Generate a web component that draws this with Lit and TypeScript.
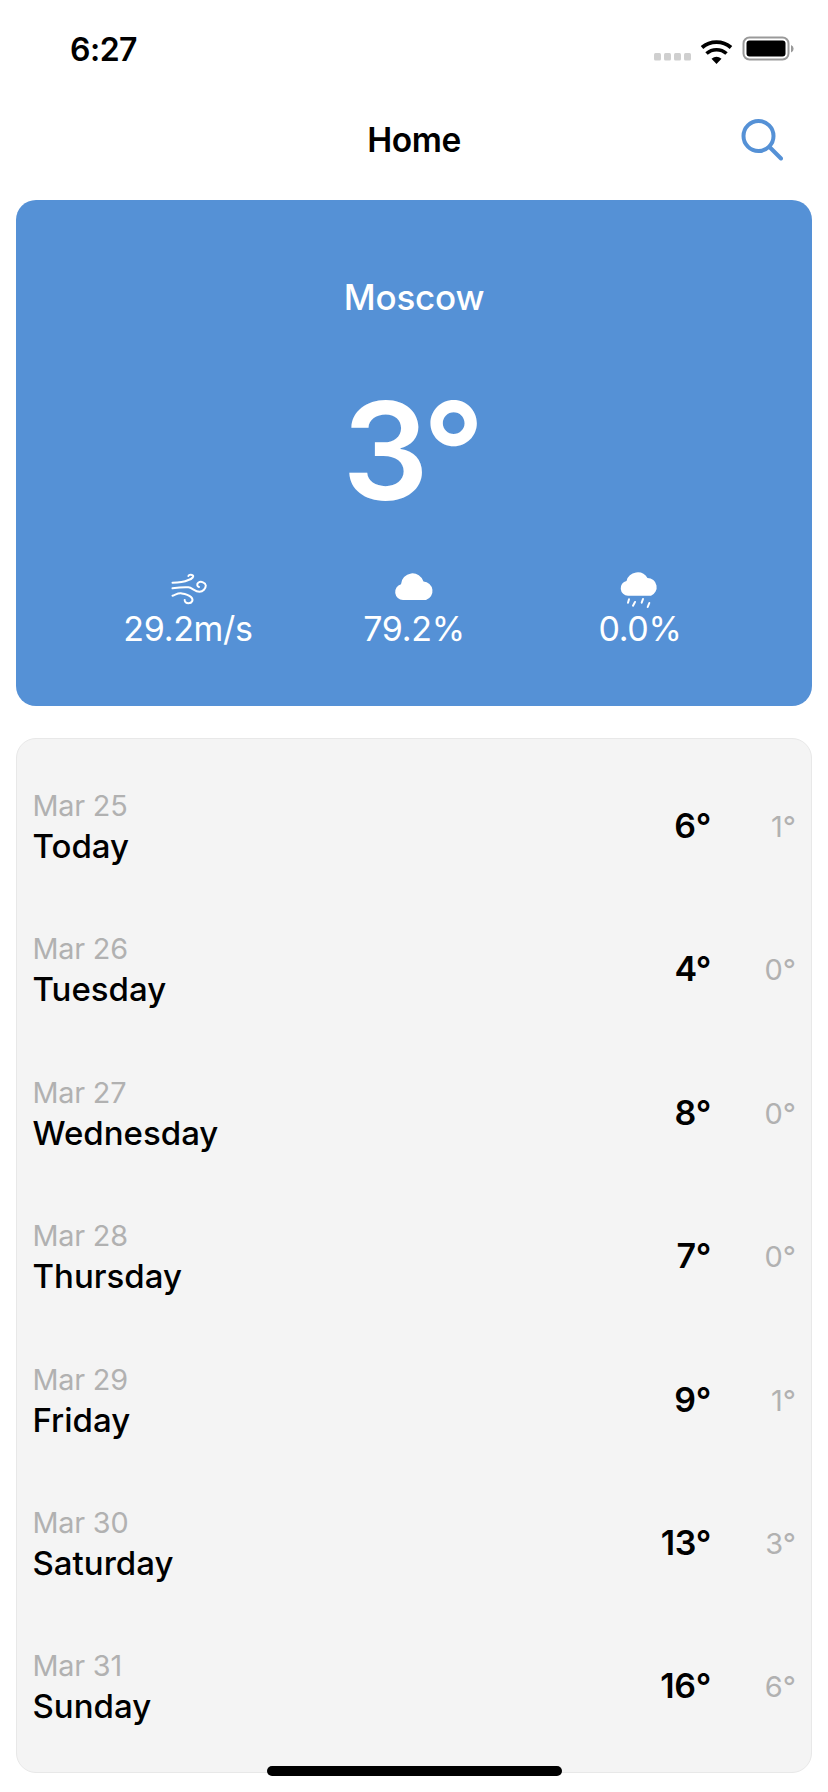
import { LitElement, html, css, svg } from "lit";
import { customElement } from "lit/decorators.js";

const DAYS = [
  { date: "Mar 25", day: "Today", hi: "6°", lo: "1°" },
  { date: "Mar 26", day: "Tuesday", hi: "4°", lo: "0°" },
  { date: "Mar 27", day: "Wednesday", hi: "8°", lo: "0°" },
  { date: "Mar 28", day: "Thursday", hi: "7°", lo: "0°" },
  { date: "Mar 29", day: "Friday", hi: "9°", lo: "1°" },
  { date: "Mar 30", day: "Saturday", hi: "13°", lo: "3°" },
  { date: "Mar 31", day: "Sunday", hi: "16°", lo: "6°" },
];

@customElement("app-root")
export class AppRoot extends LitElement {
  static styles = css`
    :host {
      display: block;
      width: 828px;
      height: 1792px;
      position: relative;
      overflow: hidden;
      background: #fff;
      font-family: Inter, "Liberation Sans", sans-serif;
      color: #000;
    }
    .status {
      height: 88px;
      box-sizing: border-box;
      padding: 33px 24px 0 70px;
      display: flex;
      justify-content: space-between;
      align-items: flex-start;
    }
    .time { font-size: 32px; line-height: 34px; font-weight: 600; letter-spacing: -0.5px; }
    .status svg { display: block; margin-top: 3px; }
    .nav {
      height: 112px;
      position: relative;
      display: flex;
      align-items: center;
      justify-content: center;
      padding-bottom: 8px;
      box-sizing: border-box;
    }
    .nav h1 { margin: 0; font-size: 33.5px; line-height: 38px; font-weight: 600; letter-spacing: -0.4px; }
    .search { position: absolute; left: 737px; top: 28px; }
    .hero {
      margin: 0 16px;
      height: 506px;
      box-sizing: border-box;
      background: #5591d6;
      border-radius: 20px;
      color: #fff;
      display: flex;
      flex-direction: column;
      align-items: center;
      padding-top: 77px;
    }
    .city { font-size: 35px; line-height: 40px; font-weight: 500; letter-spacing: -0.2px; }
    .temp { font-size: 136px; line-height: 136px; font-weight: 600; margin: 66px 6px 0 0; letter-spacing: -5px; }
    .stats {
      display: grid;
      grid-template-columns: 226px 226px 226px;
      margin-top: 51px;
    }
    .stat { display: flex; flex-direction: column; align-items: center; gap: 1px; }
    .stat svg { display: block; }
    .stat span { font-size: 34px; line-height: 38px; font-weight: 400; letter-spacing: -0.3px; }
    .list {
      margin: 32px 16px 0;
      height: 1035px;
      box-sizing: border-box;
      background: #f4f4f4;
      border: 1px solid #e8e8e8;
      border-radius: 20px;
      padding: 47px 15px 0 15.5px;
      display: flex;
      flex-direction: column;
      gap: 53.4px;
    }
    .row { height: 90px; display: flex; align-items: flex-start; }
    .names { flex: 1; display: flex; flex-direction: column; padding-top: 2px; }
    .date { font-size: 28.8px; line-height: 36px; color: #b1b1b1; letter-spacing: -0.2px; }
    .day { font-size: 33px; line-height: 44px; font-weight: 500; letter-spacing: 0; }
    .hi { font-size: 34px; line-height: 40px; font-weight: 600; width: 81px; text-align: right; margin-top: 20px; letter-spacing: -0.3px; }
    .lo { font-size: 29px; line-height: 40px; color: #b1b1b1; width: 85px; text-align: right; margin-top: 21px; }
    .indicator {
      position: absolute;
      left: 267px;
      top: 1766px;
      width: 295px;
      height: 10px;
      border-radius: 5px;
      background: #000;
    }
  `;

  render() {
    return html`
      <div class="status">
        <div class="time">6:27</div>
        <svg width="150" height="32" viewBox="0 0 150 32">
          ${[0, 10, 20, 30].map((x) => svg`<rect x=${x} y="17" width="7" height="7.5" rx="1.5" fill="#cfcfcf"></rect>`)}
          <path d="M62.5 28 L57.5 22.7 A8 8 0 0 1 67.5 22.7 Z" fill="#000"></path>
          <path d="M52.5 17.5 A15 15 0 0 1 72.5 17.5" fill="none" stroke="#000" stroke-width="3.6"></path>
          <path d="M48 11.5 A22 22 0 0 1 77 11.5" fill="none" stroke="#000" stroke-width="3.8"></path>
          <rect x="89.5" y="1.5" width="45" height="22" rx="6" fill="none" stroke="#999" stroke-width="2"></rect>
          <rect x="92.5" y="4.5" width="39" height="16" rx="3" fill="#000"></rect>
          <path d="M137 9 a4 4 0 0 1 0 7.5 Z" fill="#999"></path>
        </svg>
      </div>
      <div class="nav">
        <h1>Home</h1>
        <svg class="search" width="46" height="46" viewBox="0 0 46 46" fill="none" stroke="#5591d6" stroke-width="4" stroke-linecap="round">
          <circle cx="21.5" cy="20" r="15"></circle>
          <path d="M32.5 31 L44 42.5"></path>
        </svg>
      </div>
      <section class="hero">
        <div class="city">Moscow</div>
        <div class="temp">3°</div>
        <div class="stats">
          <div class="stat">
            <svg width="48" height="39" viewBox="0 -2 48 39" fill="none" stroke="#fff" stroke-width="2" stroke-linecap="round">
              <path d="M8.5 10.700 C14 10.700 20 10 24.400 8 C28 7 31 4 28 3 C26.500 2.300 24.500 3 24.400 4"></path>
              <path d="M8.500 16.300 C14 15.500 19 15 24.400 15.300 C28 15.600 31 19.700 35.500 19.700 C39 19.700 41.800 16.500 41.800 13.500 C41.500 10.500 37 9 34.500 10.500 C32.500 12 33 14.500 35 15"></path>
              <path d="M8.500 23.700 C12 22.500 14 21 17 21.300 C20 21.700 24 22 27 25 C30 28 28 31.300 24.400 31.300 C22 31.300 20.500 29.500 20.700 28"></path>
            </svg>
            <span>29.2m/s</span>
          </div>
          <div class="stat">
            <svg width="48" height="39" viewBox="0 -2 48 39" fill="#fff">
              <path d="M13 28 A8 8 0 0 1 11 12.300 A11.500 11.500 0 0 1 33.500 9.500 A9.500 9.500 0 0 1 36 28 Z"></path>
            </svg>
            <span>79.2%</span>
          </div>
          <div class="stat">
            <svg width="48" height="39" viewBox="0 -2 48 39">
              <path d="M12 23.700 A7.500 7.500 0 0 1 10.500 8.900 A11.500 11.500 0 0 1 31.500 6 A9.200 9.200 0 0 1 35 23.700 Z" fill="#fff"></path>
              <path d="M13 27.300 L12 30.700 M19 30 L17 33.700 M27 27 L25.700 30.700 M33.300 31 L31.700 35" stroke="#fff" stroke-width="2" stroke-linecap="round" fill="none"></path>
            </svg>
            <span>0.0%</span>
          </div>
        </div>
      </section>
      <section class="list">
        ${DAYS.map(
          (d) => html`
            <div class="row">
              <div class="names">
                <div class="date">${d.date}</div>
                <div class="day">${d.day}</div>
              </div>
              <div class="hi">${d.hi}</div>
              <div class="lo">${d.lo}</div>
            </div>
          `
        )}
      </section>
      <div class="indicator"></div>
    `;
  }
}
